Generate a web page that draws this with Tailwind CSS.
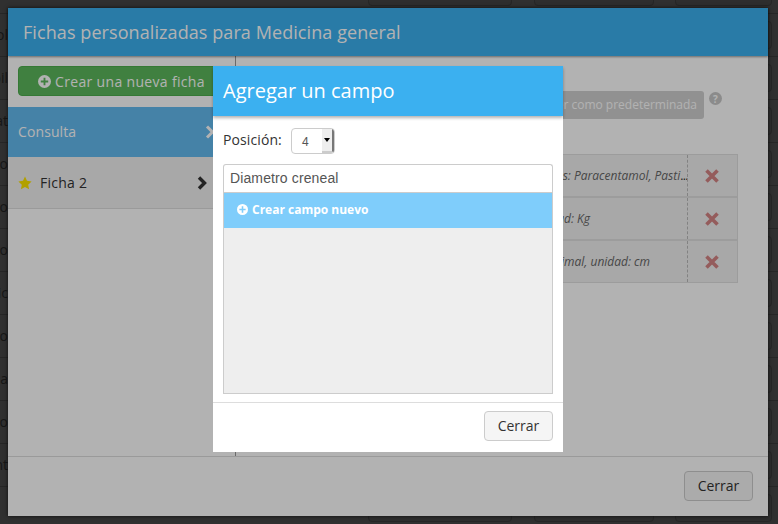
<!DOCTYPE html>
<html lang="es">
<head>
    <meta charset="UTF-8">
    <title>Fichas personalizadas</title>
    <script src="https://cdn.jsdelivr.net/npm/@tailwindcss/browser@4"></script>
</head>
<body class="relative w-[778px] h-[524px] overflow-hidden bg-[#303030] font-['Open_Sans',sans-serif] text-sm text-[#333]">
    <!-- page behind the dialog -->
    <div id="pageRows" class="-mt-[29px]"></div>

    <!-- outer dialog -->
    <div class="absolute left-[8px] top-[8px] w-[760px] h-[508px] flex flex-col bg-white shadow-[0_0_4px_rgba(0,0,0,.7)]">
        <div class="relative h-[48px] shrink-0 flex items-center pt-[1px] px-[15px] bg-[#3bb0f0] text-white text-[18px] tracking-[.08px] shadow-[0_1px_2px_rgba(0,0,0,.4)]">
            Fichas personalizadas para Medicina general
        </div>

        <div class="flex-1 flex min-h-0">
            <div class="w-[228px] shrink-0 border-r border-[#999]">
                <div class="h-[51px] pt-[10px] pl-[10px]">
                    <button class="w-[207px] h-[30px] pt-[1px] flex items-center justify-center gap-[4px] rounded-[4px] border border-[#4cae4c] bg-[#5cb85c] text-white text-sm tracking-[.33px]">
                        <svg class="w-[13px] h-[13px]" viewBox="0 0 14 14"><path fill="currentColor" fill-rule="evenodd" d="M7 0a7 7 0 1 0 0 14A7 7 0 0 0 7 0zM6 3h2v3h3v2H8v3H6V8H3V6h3z"/></svg>
                        Crear una nueva ficha
                    </button>
                </div>
                <div class="h-[50px] flex items-center justify-between pl-[10px] pr-[20px] pb-[1px] bg-[#64baf0] text-white tracking-[.1px]">
                    Consulta
                    <svg class="w-[10px] h-[14px]" viewBox="0 0 10 14"><path fill="none" stroke="currentColor" stroke-width="3" d="M2 1.5 7.5 7 2 12.5"/></svg>
                </div>
                <div class="h-[52px] flex items-center pl-[10px] pr-[28px] bg-[#f1f1f1] border-b border-[#ddd] tracking-[.25px]">
                    <svg class="w-[14px] h-[14px] mr-[8px]" viewBox="0 0 24 24"><path fill="#ffe600" d="M12 1l3.4 7.3 7.9 1-5.8 5.5 1.5 7.9-7-3.9-7 3.9 1.5-7.9L.7 9.3l7.9-1z"/></svg>
                    <span class="flex-1">Ficha 2</span>
                    <svg class="w-[10px] h-[14px]" viewBox="0 0 10 14"><path fill="none" stroke="#333" stroke-width="3.4" d="M2 1.5 7.5 7 2 12.5"/></svg>
                </div>
            </div>

            <div class="flex-1 pl-[14px] pr-[30px] pt-[35px]">
                <div class="flex justify-end items-start pr-[16px]">
                    <button class="h-[28px] w-[300px] mr-[5px] rounded-[3px] bg-[#d0d0d0] text-white text-xs flex items-center justify-end pr-[7px]">
                        Establecer como predeterminada
                    </button>
                    <span class="w-[13px] h-[13px] mt-[1px] rounded-full bg-[#c8c8c8] flex items-center justify-center text-[10px] font-bold leading-none text-white">?</span>
                </div>
                <div id="campos" class="mt-[35px] border border-[#e0e0e0] bg-[#f1f1f1] text-xs"></div>
            </div>
        </div>

        <div class="h-[60px] shrink-0 flex justify-end items-start pt-[14px] pr-[15px] border-t border-[#ddd]">
            <button class="w-[69px] h-[30px] rounded-[4px] border border-[#ccc] bg-[#f5f5f5] text-sm text-[#333]">Cerrar</button>
        </div>

        <!-- backdrop of the second dialog -->
        <div class="absolute inset-0 bg-black/30"></div>

        <!-- inner dialog -->
        <div class="absolute left-[205px] top-[58px] w-[350px] h-[386px] flex flex-col bg-white">
            <div class="h-[50px] shrink-0 flex items-center px-[10px] bg-[#3bb0f0] text-white text-[20px] shadow-[0_2px_3px_rgba(0,0,0,.3)]">
                Agregar un campo
            </div>
            <div class="flex-1 px-[10px] pt-[12px] border-b border-[#ddd]">
                <div class="flex items-center gap-[9px]">
                    <span class="w-[59px] pb-[2px] tracking-[.1px]">Posición:</span>
                    <div class="w-[44px] h-[26px] flex rounded-[4px] border border-[#ccc] overflow-hidden">
                        <span class="flex-1 pl-[10px] text-xs leading-[26px] font-['Liberation_Sans',sans-serif] text-[#555]">4</span>
                        <span class="w-[12px] flex items-center justify-center bg-[#eee] border-r-2 border-b-2 border-r-[#777] border-b-[#ccc]">
                            <span class="border-x-[3px] border-x-transparent border-t-[4px] border-t-black"></span>
                        </span>
                    </div>
                </div>
                <div class="mt-[10px] h-[28px] flex items-center px-[6px] pb-[2px] rounded-t-[3px] border border-[#ccc] border-b-0 text-sm tracking-[.12px] font-['Liberation_Sans',sans-serif] text-[#555]">Diametro creneal</div>
                <div class="h-[202px] border border-[#ccc] bg-[#eee]">
                    <div class="h-[35px] flex items-center gap-[4px] pl-[13px] pb-[2px] bg-[#7fcdfb] text-white text-xs font-bold">
                        <svg class="w-[11px] h-[11px]" viewBox="0 0 14 14"><path fill="currentColor" fill-rule="evenodd" d="M7 0a7 7 0 1 0 0 14A7 7 0 0 0 7 0zM6 3h2v3h3v2H8v3H6V8H3V6h3z"/></svg>
                        Crear campo nuevo
                    </div>
                </div>
            </div>
            <div class="h-[49px] shrink-0 flex justify-end items-start pt-[8px] pr-[10px]">
                <button class="w-[69px] h-[30px] rounded-[4px] border border-[#ccc] bg-[#f5f5f5] text-sm text-[#333]">Cerrar</button>
            </div>
        </div>
    </div>

    <script>
        const tails = ['', 'ol', 'oil', 'at', 'do', 'do', 'to', 'tic', 'olo', 'a', 'to', 'nt', ''];
        document.getElementById('pageRows').innerHTML = tails.map(t => `
            <div class="relative h-[43px] border-b border-[#262626] flex items-center">
                <span class="absolute left-0 w-[8px] overflow-hidden text-[#161616] whitespace-nowrap flex justify-end">${t}</span>
                <span class="absolute left-[368px] w-[144px] h-[28px] rounded-[4px] border border-[#262626] bg-[#2e2e2e]"></span>
                <span class="absolute left-[534px] w-[120px] h-[28px] rounded-[4px] border border-[#262626] bg-[#2e2e2e]"></span>
                <span class="absolute left-[675px] w-[97px] h-[28px] rounded-[4px] border border-[#262626] bg-[#2e2e2e]"></span>
            </div>`).join('');

        // text ends are fixed per row, the left part sits under the small dialog
        const campos = [
            { text: 'Opciones: Paracentamol, Pasti', dots: '...', cell: 'ml-[268px]', row: 'h-[43px] border-b-2 border-[#e0e0e0]' },
            { text: 'Campo numérico, unidad: Kg', dots: '', cell: 'w-[339px] text-right', row: 'h-[43px] border-b-2 border-[#e0e0e0]' },
            { text: 'Campo numérico, con un decimal, unidad: cm', dots: '', cell: 'w-[399px] text-right', row: 'h-[41px]' }
        ];
        document.getElementById('campos').innerHTML = campos.map(c => `
            <div class="${c.row} flex items-center relative">
                <div class="${c.cell} text-[#333] whitespace-nowrap"><i class="text-[#666]">${c.text}</i><span class="tracking-[-.6px]">${c.dots}</span></div>
                <div class="absolute right-0 inset-y-0 w-[50px] pr-[1px] flex items-center justify-center border-l border-dashed border-[#bbb]">
                    <svg class="w-[14px] h-[14px]" viewBox="0 0 14 14"><path stroke="#d58584" stroke-width="3.6" d="M1.5 1.5l11 11m0-11l-11 11"/></svg>
                </div>
            </div>`).join('');
    </script>
</body>
</html>
